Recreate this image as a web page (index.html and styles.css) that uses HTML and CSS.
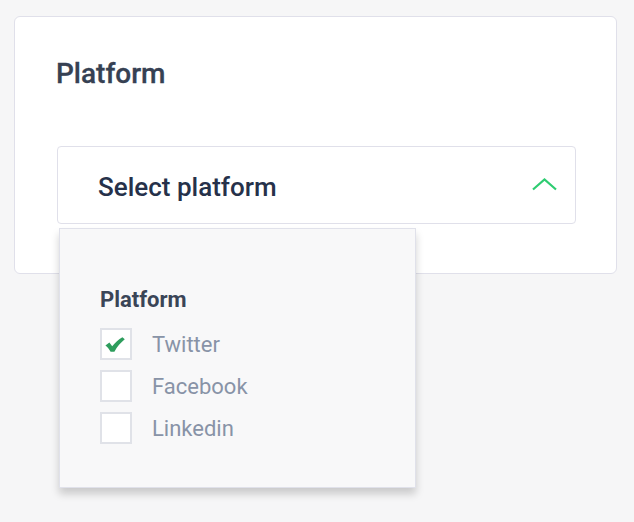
FILE: index.html
```html
<!DOCTYPE html>
<html>
<head>
<meta charset="utf-8">
<link rel="stylesheet" href="styles.css">
</head>
<body>
<div class="card">
  <h2 class="title">Platform</h2>
  <div class="select-wrap">
    <div class="select">
      <span class="select-text">Select platform</span>
      <svg class="chevron" width="27" height="13" viewBox="0 0 27 13"><polyline points="2,11.5 13.5,1.5 25,11.5" fill="none" stroke="#2ecc71" stroke-width="2.2"/></svg>
    </div>
    <div class="dropdown">
      <div class="dd-title">Platform</div>
      <ul class="options">
        <li class="option"><span class="box checked"><svg class="check" width="20" height="15" viewBox="0 0 20 15"><path d="M0.4,8.4 L4.4,5.6 L7.2,9.2 C10,5.6 13.6,2.4 17.4,0.2 L19.8,2.2 C15.6,5.6 12.2,9.6 9.4,14.7 L5.6,14.7 C4.2,12.2 2.6,10.0 0.4,8.4 Z" fill="#2e9d5d"/></svg></span><span class="label">Twitter</span></li>
        <li class="option"><span class="box"></span><span class="label">Facebook</span></li>
        <li class="option"><span class="box"></span><span class="label">Linkedin</span></li>
      </ul>
    </div>
  </div>
</div>
</body>
</html>
```
FILE: styles.css
```css
* { box-sizing: border-box; }
html, body { margin: 0; padding: 0; }
body {
  background: #f6f6f7;
  font-family: Roboto, "Liberation Sans", sans-serif;
  width: 634px;
  height: 522px;
  overflow: hidden;
}
.card {
  margin: 16px 0 0 14px;
  width: 603px;
  height: 258px;
  background: #fff;
  border: 1px solid #e0e0ea;
  border-radius: 6px;
  padding: 40px 41px 0 41px;
}
.title {
  margin: 0;
  font-size: 28px;
  line-height: 34px;
  font-weight: 500;
  color: #364153;
  -webkit-text-stroke: 0.3px #364153;
}
.select-wrap {
  position: relative;
  margin-top: 55px;
  margin-left: 1px;
  width: 519px;
}
.select {
  height: 78px;
  border: 1px solid #e0e0ea;
  border-radius: 4px;
  background: #fff;
  display: flex;
  align-items: center;
  justify-content: space-between;
  padding: 3px 17px 0 40px;
}
.select-text {
  font-size: 26px;
  font-weight: 500;
  color: #26314a;
}
.chevron { display: block; margin-top: -5px; }
.dropdown {
  position: absolute;
  top: 82px;
  left: 2px;
  width: 357px;
  height: 260px;
  background: #f8f8f9;
  border: 1px solid #e0e1ea;
  box-shadow: 0 6px 8px rgba(0, 0, 0, 0.18);
  padding: 57px 0 0 40px;
}
.dd-title {
  font-size: 22px;
  line-height: 27px;
  font-weight: 700;
  color: #3a4557;
}
.options {
  list-style: none;
  margin: 15px 0 0;
  padding: 0;
  display: flex;
  flex-direction: column;
  gap: 10px;
}
.option {
  display: flex;
  align-items: center;
  gap: 20px;
}
.box {
  width: 32px;
  height: 32px;
  border: 2px solid #e0e2e8;
  background: #fff;
  display: flex;
  align-items: center;
  justify-content: center;
  padding-right: 3px;
}
.check { display: block; }
.label {
  font-size: 22px;
  color: #8893a7;
}
```
